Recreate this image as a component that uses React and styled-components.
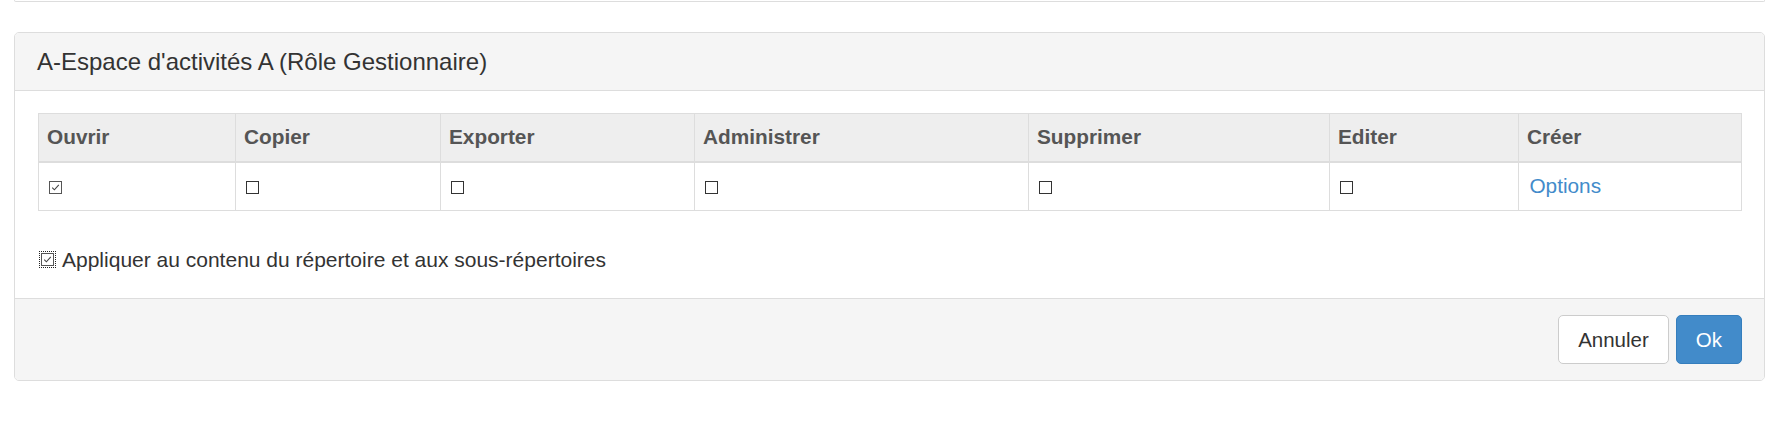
import React from "react";
import styled, { createGlobalStyle } from "styled-components";

const GlobalStyle = createGlobalStyle`
  html, body { margin: 0; padding: 0; background: #fff; }
  body {
    font-family: "Liberation Sans", Arial, Helvetica, sans-serif;
    font-size: 21px;
    color: #333;
  }
`;

const Page = styled.div`
  padding: 0 23px 40px 14px;
`;

const PrevPanel = styled.div`
  height: 1px;
  border: 1px solid #ddd;
  border-top: 0;
  border-radius: 0 0 5px 5px;
  margin-bottom: 30px;
`;

const Panel = styled.section`
  border: 1px solid #ddd;
  border-radius: 5px;
  background: #fff;
  overflow: hidden;
`;

const Heading = styled.header`
  background: #f5f5f5;
  border-bottom: 1px solid #ddd;
  padding: 16px 22px;
`;

const Title = styled.h3`
  margin: 0;
  font-size: 24px;
  line-height: 25px;
  font-weight: normal;
  color: #333;
`;

const Body = styled.div`
  padding: 22px 23px 23px;
`;

const Table = styled.table`
  width: 100%;
  border-collapse: collapse;
  table-layout: fixed;
  margin-bottom: 34px;
`;

const Th = styled.th`
  box-sizing: border-box;
  width: ${(p) => p.$w}px;
  text-align: left;
  background: #eee;
  color: #555;
  font-weight: bold;
  font-size: 20.8px;
  padding: 10.4px 8px;
  line-height: 26px;
  border: 1px solid #ddd;
  border-bottom: 2px solid #ddd;
`;

const Td = styled.td`
  padding: 10.4px;
  line-height: 26px;
  font-size: 20.8px;
  border: 1px solid #ddd;
  vertical-align: middle;
`;

const Box = styled.span`
  display: inline-block;
  box-sizing: border-box;
  width: 13px;
  height: 13px;
  border: 1px solid ${(p) => (p.$checked ? "#555" : "#333")};
  background: #fff;
  vertical-align: -1px;
  position: relative;
  outline: ${(p) => (p.$focus ? "1px dotted #222" : "none")};
  outline-offset: 1px;
  svg {
    position: absolute;
    left: 1px;
    top: 1px;
  }
`;

const Link = styled.a`
  color: #428bca;
  text-decoration: none;
  cursor: pointer;
`;

const CheckLabel = styled.label`
  display: flex;
  align-items: center;
  gap: 8px;
  line-height: 30px;
  padding-left: 3px;
`;

const Footer = styled.footer`
  background: #f5f5f5;
  border-top: 1px solid #ddd;
  padding: 16px 22px 16px;
  display: flex;
  justify-content: flex-end;
  gap: 7px;
`;

const Button = styled.button`
  font-family: inherit;
  font-size: 20.5px;
  line-height: 27px;
  padding: 10px 19px;
  border-radius: 5px;
  border: 1px solid ${(p) => (p.$primary ? "#357ebd" : "#ccc")};
  background: ${(p) => (p.$primary ? "#428bca" : "#fff")};
  color: ${(p) => (p.$primary ? "#fff" : "#333")};
  cursor: pointer;
`;

const Check = ({ checked, focus }) => (
  <Box $checked={checked} $focus={focus}>
    {checked && (
      <svg width="9" height="9" viewBox="0 0 9 9">
        <path d="M1.2 4.6 L3.4 6.8 L7.8 1.8" fill="none" stroke="#444" strokeWidth="1.1" />
      </svg>
    )}
  </Box>
);

const columns = [
  { label: "Ouvrir", w: 197 },
  { label: "Copier", w: 205 },
  { label: "Exporter", w: 254 },
  { label: "Administrer", w: 334 },
  { label: "Supprimer", w: 301 },
  { label: "Editer", w: 189 },
  { label: "Créer", w: 223 },
];

export default function App() {
  return (
    <>
      <GlobalStyle />
      <Page>
        <PrevPanel />
        <Panel>
          <Heading>
            <Title>A-Espace d'activités A (Rôle Gestionnaire)</Title>
          </Heading>
          <Body>
            <Table>
              <thead>
                <tr>
                  {columns.map((c) => (
                    <Th key={c.label} $w={c.w}>
                      {c.label}
                    </Th>
                  ))}
                </tr>
              </thead>
              <tbody>
                <tr>
                  <Td><Check checked /></Td>
                  <Td><Check /></Td>
                  <Td><Check /></Td>
                  <Td><Check /></Td>
                  <Td><Check /></Td>
                  <Td><Check /></Td>
                  <Td><Link>Options</Link></Td>
                </tr>
              </tbody>
            </Table>
            <CheckLabel>
              <Check checked focus />
              Appliquer au contenu du répertoire et aux sous-répertoires
            </CheckLabel>
          </Body>
          <Footer>
            <Button>Annuler</Button>
            <Button $primary>Ok</Button>
          </Footer>
        </Panel>
      </Page>
    </>
  );
}
